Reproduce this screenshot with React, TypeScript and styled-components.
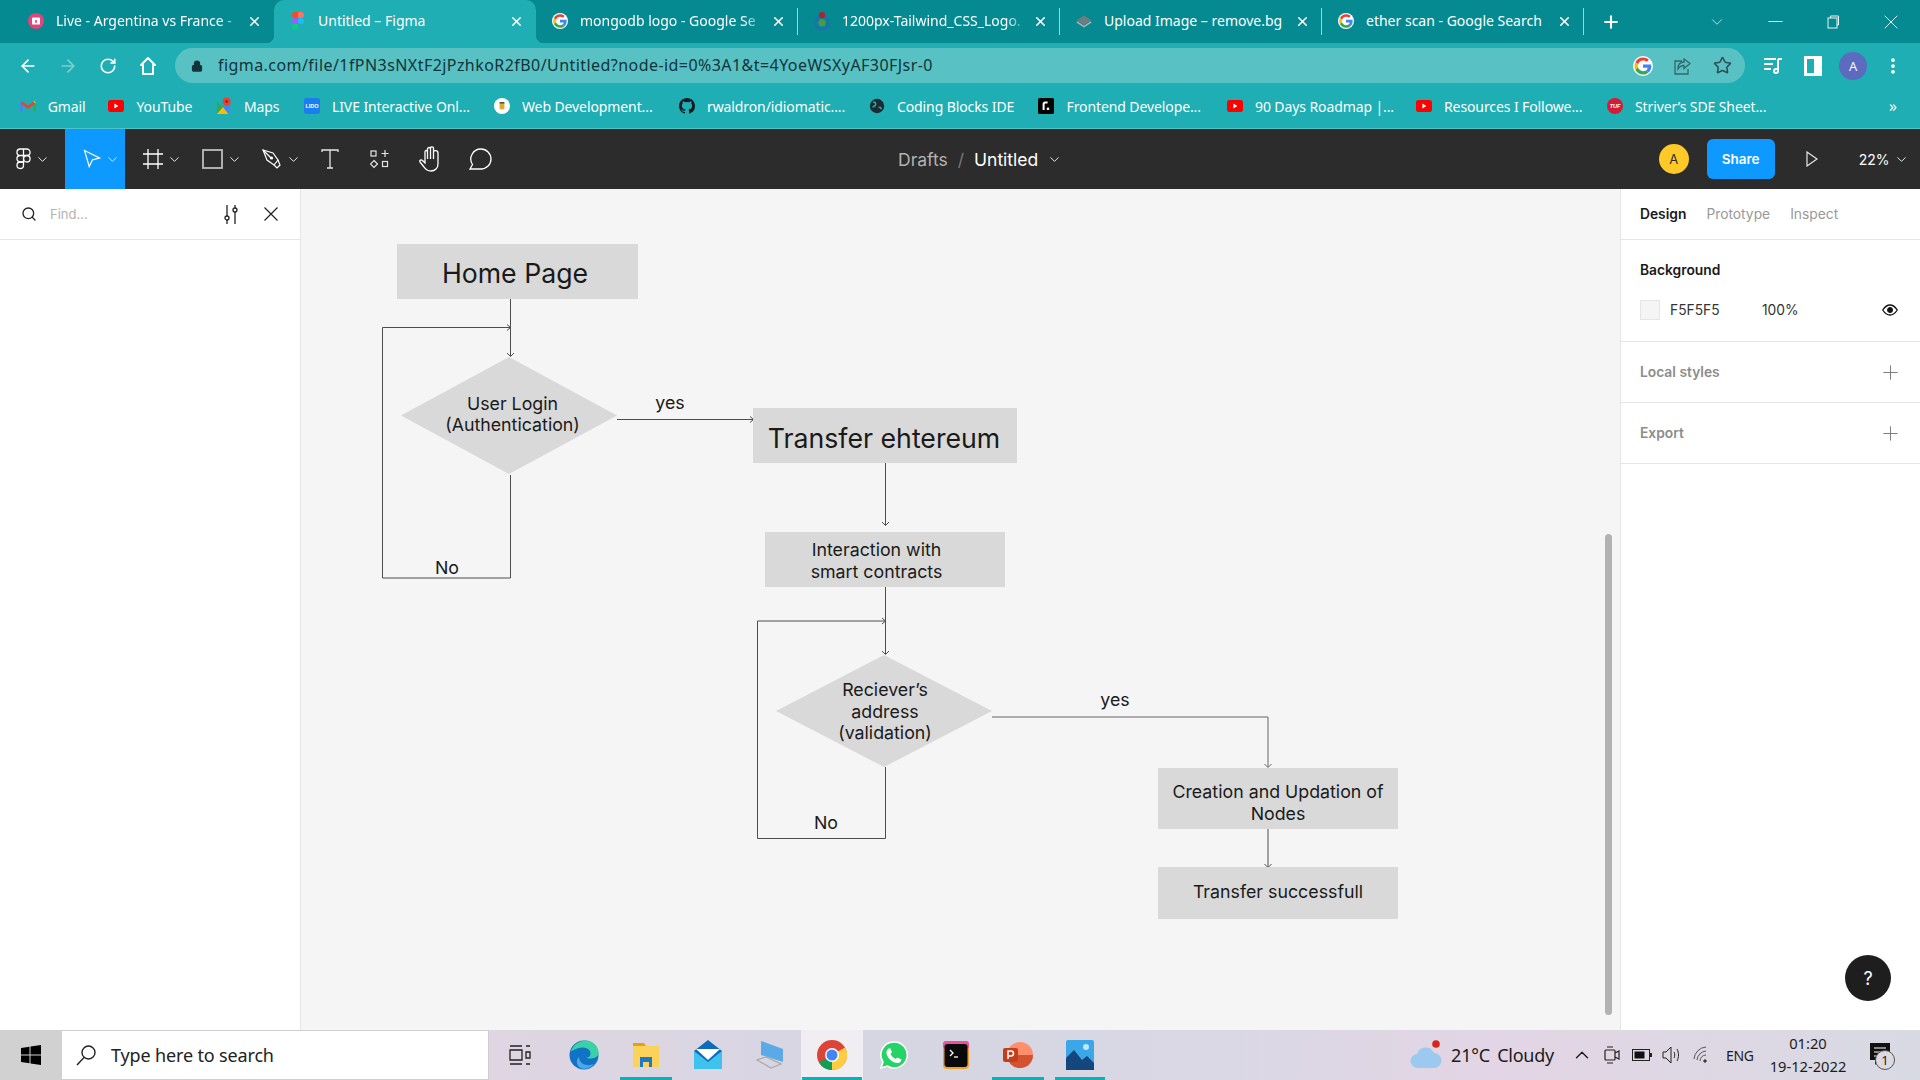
import { ReactNode } from "react";
import styled, { createGlobalStyle } from "styled-components";
import { ChevronDown, Minus, Plus, X, Search, ArrowLeft, ArrowRight, RotateCw, Star, Lock, MoreVertical, ChevronUp } from "lucide-react";

const GlobalStyle = createGlobalStyle`
  html, body { margin: 0; padding: 0; }
  body { font-family: "Open Sans", "Liberation Sans", sans-serif; overflow: hidden; }
  * { box-sizing: border-box; }
`;

const Page = styled.div`
  width: 1920px;
  height: 1080px;
  display: flex;
  flex-direction: column;
  overflow: hidden;
`;

/* browser chrome */
const TabStrip = styled.div`
  height: 43px;
  flex: none;
  display: flex;
  align-items: stretch;
  padding-left: 12px;
  background: #058a92;
`;
const Tab = styled.div<{ $active?: boolean; $sep?: boolean }>`
  position: relative;
  width: 262px;
  flex: none;
  display: flex;
  align-items: center;
  gap: 12px;
  padding: 0 0 2px 16px;
  border-radius: 10px 10px 0 0;
  background: ${(p) => (p.$active ? "#1eaeb3" : "transparent")};
  color: #fff;
  ${(p) =>
    p.$sep &&
    `&::after {
      content: "";
      position: absolute;
      right: 0;
      top: 8px;
      bottom: 8px;
      width: 1px;
      background: #9fd3d6;
    }`}
  ${(p) =>
    p.$active &&
    `&::before, &::after {
      content: "";
      position: absolute;
      bottom: 0;
      width: 8px;
      height: 8px;
    }
    &::before {
      left: -8px;
      background: radial-gradient(circle at 0 0, transparent 8px, #1eaeb3 8.5px);
    }
    &::after {
      right: -8px;
      background: radial-gradient(circle at 100% 0, transparent 8px, #1eaeb3 8.5px);
    }`}
`;
const TabIcon = styled.span`
  width: 16px;
  flex: none;
  display: flex;
  justify-content: center;
`;
const TabTitle = styled.span<{ $fade?: boolean }>`
  width: 186px;
  font-size: 14px;
  font-family: "Noto Sans", sans-serif;
  white-space: nowrap;
  ${(p) =>
    p.$fade &&
    `-webkit-mask-image: linear-gradient(90deg, #000 88%, transparent 100%);
     mask-image: linear-gradient(90deg, #000 88%, transparent 100%);`}
`;
const TabClose = styled.span`
  position: absolute;
  left: 235px;
  top: 14px;
  display: flex;
`;
const NewTab = styled.div`
  width: 54px;
  display: flex;
  align-items: center;
  justify-content: center;
  color: #fff;
`;
const WindowButtons = styled.div`
  margin-left: auto;
  display: flex;
`;
const WinBtn = styled.div`
  width: 58px;
  display: flex;
  align-items: center;
  justify-content: center;
  color: #e8f6f6;
`;

const NavRow = styled.div`
  height: 45px;
  flex: none;
  display: flex;
  align-items: center;
  background: #1eaeb3;
`;
const NavGroup = styled.div`
  width: 175px;
  flex: none;
  display: flex;
  padding-left: 8px;
`;
const NavBtn = styled.div<{ $dim?: boolean }>`
  width: 40px;
  height: 35px;
  flex: none;
  display: flex;
  align-items: center;
  justify-content: center;
  color: ${(p) => (p.$dim ? "#7fd0d3" : "#fff")};
`;
const AddressBar = styled.div`
  width: 1570px;
  height: 35px;
  flex: none;
  display: flex;
  align-items: center;
  padding: 0 3px 0 16px;
  border-radius: 18px;
  background: #58c1c3;
  color: #12343a;
`;
const Url = styled.span`
  margin: 0 0 2px 15px;
  flex: 1;
  font-size: 16px;
  font-family: "Noto Sans", sans-serif;
  letter-spacing: 0.44px;
  white-space: nowrap;
`;
const BarBtn = styled.div`
  width: 39.5px;
  display: flex;
  justify-content: center;
  color: #34666b;
`;
const ProfileGroup = styled.div`
  margin-left: 8px;
  display: flex;
`;
const Avatar = styled.div`
  width: 28px;
  height: 28px;
  border-radius: 50%;
  display: flex;
  align-items: center;
  justify-content: center;
  background: #5c6bc0;
  color: #fff;
  font-size: 13px;
`;

const BookmarkBar = styled.div`
  position: relative;
  height: 41px;
  flex: none;
  display: flex;
  align-items: center;
  padding: 0 0 4px 19.7px;
  background: #1eaeb3;
  border-bottom: 1px solid #4cc5c8;
`;
const Bookmark = styled.div<{ $w: number }>`
  width: ${(p) => p.$w}px;
  flex: none;
  display: flex;
  align-items: center;
  gap: 12px;
  color: #fff;
  font-size: 14px;
  font-family: "Noto Sans", sans-serif;
  letter-spacing: -0.1px;
  white-space: nowrap;
`;
const BookmarkIcon = styled.span`
  width: 16px;
  flex: none;
  display: flex;
  justify-content: center;
`;
const MoreBookmarks = styled.span`
  position: absolute;
  right: 23px;
  top: 7px;
  color: #fff;
  font-size: 16px;
`;

/* figma toolbar */
const FigmaBar = styled.div`
  height: 60px;
  flex: none;
  display: grid;
  grid-template-columns: 898px 1fr auto;
  align-items: stretch;
  background: #2c2c2c;
  color: #fff;
`;
const Tools = styled.div`
  display: flex;
`;
const Tool = styled.div<{ $w: number; $active?: boolean; $pad?: number }>`
  width: ${(p) => p.$w}px;
  flex: none;
  display: flex;
  align-items: center;
  justify-content: ${(p) => (p.$pad === undefined ? "center" : "flex-start")};
  padding-left: ${(p) => p.$pad ?? 0}px;
  gap: 4px;
  background: ${(p) => (p.$active ? "#0d99ff" : "transparent")};
  color: #fff;
`;
const TitleGroup = styled.div`
  display: flex;
  align-items: center;
  font-family: Inter, sans-serif;
  font-size: 17.5px;
`;
const Crumb = styled.span`
  color: #b3b3b3;
`;
const Slash = styled.span`
  margin: 0 10px;
  color: #777;
`;
const FileName = styled.span`
  margin-right: 9px;
  color: #fff;
`;
const BarRight = styled.div`
  display: flex;
  align-items: center;
  padding-right: 11px;
  font-family: Inter, sans-serif;
`;
const UserDot = styled.div`
  width: 30px;
  height: 30px;
  border-radius: 50%;
  display: flex;
  align-items: center;
  justify-content: center;
  background: #ffc928;
  color: #2c2c2c;
  font-size: 13px;
`;
const ShareButton = styled.div`
  width: 68px;
  height: 40px;
  margin-left: 18px;
  display: flex;
  align-items: center;
  justify-content: center;
  border-radius: 6px;
  background: #0d99ff;
  color: #fff;
  font-size: 13.5px;
  font-weight: 600;
`;
const PlayBtn = styled.div`
  width: 24px;
  margin: 0 35px 0 25px;
  display: flex;
  justify-content: center;
`;
const Zoom = styled.span`
  font-size: 14px;
  margin-right: 4.5px;
`;

/* workspace */
const Workspace = styled.div`
  flex: 1;
  min-height: 0;
  display: flex;
`;
const LeftPanel = styled.aside`
  width: 301px;
  flex: none;
  background: #fff;
  border-right: 1px solid #e5e5e5;
`;
const FindRow = styled.div`
  height: 51px;
  display: flex;
  align-items: center;
  gap: 24px;
  padding: 0 21px 0 21px;
  border-bottom: 1px solid #e5e5e5;
`;
const FindText = styled.span`
  margin-left: -11px;
  flex: 1;
  font-family: Inter, sans-serif;
  font-size: 13px;
  color: #b3b3b3;
`;
const FindAction = styled.div`
  width: 16px;
  display: flex;
  justify-content: center;
  color: #222;
`;
const Canvas = styled.main`
  position: relative;
  width: 1319px;
  flex: none;
  background: #f5f5f5;
  font-family: Inter, sans-serif;
  color: #1a1a1a;
  overflow: hidden;
`;
const Lines = styled.svg`
  position: absolute;
  left: 0;
  top: 0;
`;
const Shape = styled.div<{ $x: number; $y: number; $w: number; $h: number; $diamond?: boolean }>`
  position: absolute;
  left: ${(p) => p.$x - 301}px;
  top: ${(p) => p.$y - 189}px;
  width: ${(p) => p.$w}px;
  height: ${(p) => p.$h}px;
  background: #d9d9d9;
  ${(p) => p.$diamond && "clip-path: polygon(50% 0, 100% 50%, 50% 100%, 0 50%);"}
`;
const ChartLabel = styled.div<{ $x: number; $y: number; $big?: boolean }>`
  position: absolute;
  left: ${(p) => p.$x - 301}px;
  top: ${(p) => p.$y - 189}px;
  transform: translate(-50%, -50%);
  font-size: ${(p) => (p.$big ? "26.7px" : "17.8px")};
  line-height: 21.5px;
  text-align: center;
  white-space: pre;
`;
const ScrollThumb = styled.div`
  position: absolute;
  left: 1304px;
  top: 345px;
  width: 7px;
  height: 481px;
  border-radius: 4px;
  background: #b2b2b2;
`;
const HelpButton = styled.div`
  position: absolute;
  right: -271px;
  bottom: 29px;
  width: 46px;
  height: 46px;
  z-index: 2;
  border-radius: 50%;
  display: flex;
  align-items: center;
  justify-content: center;
  background: #1e1e1e;
  color: #fff;
  font-size: 18px;
  font-family: Inter, sans-serif;
`;
const CanvasWrap = styled.div`
  position: relative;
  display: flex;
`;
const RightPanel = styled.aside`
  flex: 1;
  background: #fff;
  border-left: 1px solid #e5e5e5;
  font-family: Inter, sans-serif;
  font-size: 13.8px;
  line-height: 17px;
`;
const TabsRow = styled.div`
  height: 51px;
  display: flex;
  align-items: center;
  gap: 20px;
  padding: 0 0 0 19px;
  border-bottom: 1px solid #e5e5e5;
`;
const PanelTab = styled.span<{ $active?: boolean }>`
  font-weight: ${(p) => (p.$active ? 600 : 400)};
  color: ${(p) => (p.$active ? "#1a1a1a" : "#999")};
`;
const BgSection = styled.section`
  height: 102px;
  padding: 22px 19px 0;
  border-bottom: 1px solid #e5e5e5;
`;
const SectionTitle = styled.div`
  font-weight: 600;
  color: #1a1a1a;
`;
const ColorRow = styled.div`
  margin-top: 21px;
  display: flex;
  align-items: center;
  color: #333;
`;
const Swatch = styled.div`
  width: 20px;
  height: 20px;
  border: 1px solid #e5e5e5;
  background: #f5f5f5;
`;
const Hex = styled.span`
  width: 92px;
  margin-left: 10px;
`;
const Percent = styled.span`
  width: 120px;
`;
const CollapsedSection = styled.section`
  height: 61px;
  display: flex;
  align-items: center;
  justify-content: space-between;
  padding: 0 18px 0 19px;
  border-bottom: 1px solid #e5e5e5;
  color: #8c8c8c;
  font-weight: 600;
`;

/* windows taskbar */
const Taskbar = styled.footer`
  height: 50px;
  flex: none;
  display: flex;
  align-items: stretch;
  background: linear-gradient(90deg, #d4d4d4 0 3%, #e0d5e3 24%, #d5d6e2 48%, #d9d8e4 62%, #e3d5e5 78%, #d8dae3 100%);
`;
const StartBtn = styled.div`
  width: 61px;
  flex: none;
  display: flex;
  align-items: center;
  justify-content: center;
  background: #d1d1d1;
`;
const SearchBox = styled.div`
  width: 428px;
  flex: none;
  display: flex;
  align-items: center;
  gap: 14px;
  padding-left: 13px;
  background: #fff;
  border: 1px solid #cfcfcf;
  font-family: "Noto Sans", sans-serif;
  font-size: 18px;
  letter-spacing: -0.15px;
  color: #222;
`;
const TaskBtn = styled.div<{ $on?: boolean; $bar?: number; $lead?: boolean }>`
  position: relative;
  width: 62px;
  flex: none;
  display: flex;
  align-items: center;
  justify-content: center;
  margin-right: ${(p) => (p.$lead ? "1.5px" : "0")};
  background: ${(p) => (p.$on ? "#f0edf3" : "transparent")};
  ${(p) =>
    p.$bar &&
    `&::after {
      content: "";
      position: absolute;
      bottom: 0;
      left: 50%;
      transform: translateX(-50%);
      width: ${p.$bar}px;
      height: 3px;
      background: #0cb1b8;
    }`}
`;
const Tray = styled.div`
  margin-left: auto;
  display: flex;
  align-items: center;
  font-family: "Noto Sans", sans-serif;
  color: #1c1c1c;
`;
const Weather = styled.span`
  margin: 0 13px 0 9px;
  font-size: 18px;
  letter-spacing: -0.25px;
  word-spacing: 3px;
  white-space: nowrap;
`;
const TrayIcon = styled.div`
  width: 30px;
  display: flex;
  justify-content: center;
`;
const Lang = styled.span`
  width: 28px;
  margin-left: 9px;
  font-size: 14px;
  letter-spacing: -0.3px;
  white-space: nowrap;
`;
const Clock = styled.div`
  width: 108px;
  text-align: center;
  font-size: 14.7px;
  line-height: 23px;
`;
const Notif = styled.div`
  position: relative;
  width: 24px;
  margin: 0 26px 0 8px;
  display: flex;
`;
const NotifCount = styled.span`
  position: absolute;
  left: 5px;
  top: 7px;
  width: 20px;
  height: 20px;
  border: 1px solid #555;
  border-radius: 50%;
  display: flex;
  align-items: center;
  justify-content: center;
  background: #dcd9e2;
  font-size: 13px;
`;
const TinyMark = styled.svg`
  font-family: "Liberation Sans", sans-serif;
  font-weight: 700;
`;

const GoogleG = ({ size = 18 }: { size?: number }) => (
  <svg width={size} height={size} viewBox="0 0 48 48">
    <circle cx="24" cy="24" r="24" fill="#fff" />
    <path fill="#ea4335" d="M24 11c3.4 0 6.3 1.200 8.600 3.300l5.600-5.600C34.600 5.500 29.700 3.500 24 3.500 16 3.500 9.100 8.100 5.700 14.800l6.600 5.100C13.900 14.700 18.500 11 24 11z" />
    <path fill="#4285f4" d="M44 24.500c0-1.500-.1-2.900-.4-4.300H24v8.100h11.300c-.5 2.600-2 4.900-4.200 6.400l6.400 5C41.300 36.100 44 30.800 44 24.500z" />
    <path fill="#fbbc05" d="M12.300 28.100c-.4-1.300-.7-2.700-.7-4.100s.2-2.800.7-4.100l-6.600-5.100C4.300 17.500 3.500 20.700 3.500 24s.8 6.500 2.200 9.200l6.600-5.100z" />
    <path fill="#34a853" d="M24 44.500c5.500 0 10.200-1.800 13.500-4.900l-6.400-5c-1.800 1.200-4.100 1.900-7.100 1.900-5.500 0-10.100-3.700-11.700-8.700l-6.600 5.100C9.100 39.900 16 44.500 24 44.500z" />
  </svg>
);

const YouTubeIcon = () => (
  <svg width="20" height="16" viewBox="0 0 20 16">
    <rect width="20" height="15" y="0.500" rx="3.500" fill="#f00" />
    <path d="M8 5l5 3-5 3z" fill="#fff" />
  </svg>
);

const FigmaColor = () => (
  <svg width="12" height="18" viewBox="0 0 12 18">
    <path d="M0 3a3 3 0 0 1 3-3h3v6H3a3 3 0 0 1-3-3z" fill="#f24e1e" />
    <path d="M6 0h3a3 3 0 0 1 0 6H6z" fill="#ff7262" />
    <path d="M0 9a3 3 0 0 1 3-3h3v6H3a3 3 0 0 1-3-3z" fill="#a259ff" />
    <circle cx="9" cy="9" r="3" fill="#1abcfe" />
    <path d="M0 15a3 3 0 0 1 3-3h3v3a3 3 0 0 1-6 0z" fill="#0acf83" />
  </svg>
);

const tabs: { title: string; icon: ReactNode; fade?: boolean; active?: boolean; sep?: boolean }[] = [
  {
    title: "Live - Argentina vs France - ",
    fade: true,
    icon: (
      <svg width="20" height="20" viewBox="0 0 18 18">
        <circle cx="9" cy="9" r="9" fill="#e0457b" />
        <rect x="4.500" y="5" width="9" height="8" rx="1" fill="#fff" />
        <rect x="8" y="8" width="2" height="3" fill="#e0457b" />
      </svg>
    ),
  },
  { title: "Untitled – Figma", active: true, icon: <FigmaColor /> },
  { title: "mongodb logo - Google Se", fade: true, sep: true, icon: <GoogleG size={20} /> },
  {
    title: "1200px-Tailwind_CSS_Logo.",
    fade: true,
    sep: true,
    icon: (
      <svg width="20" height="22" viewBox="0 0 18 20">
        <circle cx="9" cy="12" r="7.500" fill="none" stroke="#1f6fb2" strokeWidth="2.500" />
        <circle cx="9" cy="12" r="4" fill="#4a9a4a" />
        <circle cx="9" cy="3.500" r="3.500" fill="#b3202c" />
      </svg>
    ),
  },
  {
    title: "Upload Image – remove.bg",
    sep: true,
    icon: (
      <svg width="20" height="18" viewBox="0 0 20 18">
        <path d="M10 2l9 6-9 6-9-6z" fill="#6f7c80" />
        <path d="M1 10l9 6 9-6" fill="none" stroke="#a9b3b6" strokeWidth="2" />
      </svg>
    ),
  },
  { title: "ether scan - Google Search", sep: true, icon: <GoogleG size={20} /> },
];

const Github = () => (
  <svg width="20" height="20" viewBox="0 0 16 16">
    <path
      fill="#161b22"
      d="M8 0C3.580 0 0 3.580 0 8c0 3.540 2.290 6.530 5.470 7.590.4.070.55-.170.55-.380v-1.340c-2.230.480-2.700-1.070-2.700-1.070-.360-.920-.890-1.170-.890-1.170-.730-.500.050-.490.050-.490.800.060 1.230.830 1.230.830.710 1.220 1.870.870 2.330.660.070-.520.280-.870.510-1.070-1.780-.200-3.640-.890-3.640-3.950 0-.870.310-1.590.820-2.150-.080-.200-.360-1.020.080-2.120 0 0 .670-.210 2.200.820a7.600 7.600 0 0 1 4 0c1.530-1.040 2.200-.820 2.200-.820.440 1.100.160 1.920.080 2.120.510.560.820 1.270.820 2.150 0 3.070-1.870 3.750-3.650 3.950.290.250.540.730.540 1.480v2.200c0 .210.150.460.550.380A8.010 8.010 0 0 0 16 8c0-4.420-3.580-8-8-8z"
    />
  </svg>
);

const bookmarks: { label: string; w: number; icon: ReactNode }[] = [
  {
    label: "Gmail",
    w: 88.8,
    icon: (
      <svg width="18" height="14" viewBox="0 0 18 14" fill="none" strokeWidth="3">
        <path d="M1.500 13V3" stroke="#4285f4" />
        <path d="M16.500 13V3" stroke="#34a853" />
        <path d="M2 3l7 5.500L16 3" stroke="#ea4335" />
        <path d="M16 3l1-.8" stroke="#fbbc05" />
      </svg>
    ),
  },
  { label: "YouTube", w: 107.5, icon: <YouTubeIcon /> },
  {
    label: "Maps",
    w: 88,
    icon: (
      <svg width="18" height="20" viewBox="0 0 18 20">
        <path d="M1 5l7 6-7 8z" fill="#34a853" />
        <path d="M1 19l7-8 6 8z" fill="#fbbc05" />
        <path d="M14 19L8 11l8-4z" fill="#4285f4" />
        <circle cx="12" cy="5" r="4.500" fill="#ea4335" />
        <circle cx="12" cy="5" r="1.500" fill="#a31515" />
      </svg>
    ),
  },
  {
    label: "LIVE Interactive Onl...",
    w: 190,
    icon: (
      <TinyMark width="20" height="20" viewBox="0 0 20 20">
        <rect width="20" height="20" rx="3" fill="#1a7df0" />
        <text x="10" y="12.500" fontSize="7" textAnchor="middle" fill="#fff">
          LIDO
        </text>
      </TinyMark>
    ),
  },
  {
    label: "Web Development...",
    w: 185,
    icon: (
      <svg width="20" height="20" viewBox="0 0 20 20">
        <circle cx="10" cy="10" r="10" fill="#fff" />
        <rect x="7" y="6" width="6" height="8" rx="1" fill="#e6a82d" />
        <rect x="7" y="5" width="6" height="2" fill="#555" />
      </svg>
    ),
  },
  { label: "rwaldron/idiomatic....", w: 190, icon: <Github /> },
  {
    label: "Coding Blocks IDE",
    w: 169.5,
    icon: (
      <svg width="20" height="20" viewBox="0 0 20 20">
        <circle cx="10" cy="10" r="9" fill="#1f2a30" />
        <path d="M5 5c3 0 4 2 3 4s-3 1-3 3M12 12c2-1 3 0 3 2" stroke="#1eaeb3" strokeWidth="2" fill="none" />
      </svg>
    ),
  },
  {
    label: "Frontend Develope...",
    w: 188.5,
    icon: (
      <svg width="20" height="20" viewBox="0 0 20 20">
        <rect width="20" height="20" rx="2" fill="#000" />
        <path d="M7 15V7.500a2 2 0 0 1 2-2h3" stroke="#fff" strokeWidth="2.500" fill="none" />
        <rect x="11" y="12" width="3" height="3" fill="#fff" />
      </svg>
    ),
  },
  { label: "90 Days Roadmap |...", w: 189, icon: <YouTubeIcon /> },
  { label: "Resources I Followe...", w: 191, icon: <YouTubeIcon /> },
  {
    label: "Striver’s SDE Sheet...",
    w: 170,
    icon: (
      <TinyMark width="20" height="20" viewBox="0 0 20 20">
        <circle cx="10" cy="10" r="10" fill="#d71a36" />
        <text x="10" y="12.500" fontSize="7" fontStyle="italic" textAnchor="middle" fill="#fff">
          TUF
        </text>
      </TinyMark>
    ),
  },
];

const FigmaMark = () => (
  <svg width="15" height="22" viewBox="0 0 15 22" fill="none" stroke="#fff" strokeWidth="1.300">
    <path d="M7.500 1H4.200a3.250 3.250 0 0 0 0 6.500h3.300zM7.500 1h3.300a3.250 3.250 0 0 1 0 6.500H7.500zM7.500 7.500H4.200a3.250 3.250 0 0 0 0 6.500h3.300z" />
    <circle cx="10.800" cy="10.750" r="3.250" />
    <path d="M7.500 14H4.200a3.250 3.250 0 1 0 3.300 3.250z" />
  </svg>
);
const MoveIcon = () => (
  <svg width="18" height="20" viewBox="0 0 18 20" fill="none" stroke="#fff" strokeWidth="1.200">
    <path d="M1.500 1.500l15 7.500-7 1.800-3.300 6.700z" />
  </svg>
);
const FrameIcon = () => (
  <svg width="20" height="20" viewBox="0 0 20 20" stroke="#fff" strokeWidth="1.300">
    <path d="M5 0v20M15 0v20M0 5h20M0 15h20" />
  </svg>
);
const RectIcon = () => (
  <svg width="21" height="20" viewBox="0 0 21 20" fill="none" stroke="#bdbdbd" strokeWidth="1.800">
    <rect x="1" y="1" width="19" height="18" />
  </svg>
);
const PenIcon = () => (
  <svg width="20" height="20" viewBox="0 0 20 20" fill="none" stroke="#fff" strokeWidth="1.200">
    <path d="M1 1l10 3 5 7-4 5-7-5z" />
    <path d="M12 16l3 3 3-3-2-5" />
    <circle cx="9.500" cy="9" r="1" fill="#fff" />
    <path d="M1 1l8 8" />
  </svg>
);
const TextIcon = () => (
  <svg width="18" height="20" viewBox="0 0 18 20" fill="none" stroke="#e6e6e6" strokeWidth="1.300">
    <path d="M1 3V1h16v2M9 1v18M6 19h6" />
  </svg>
);
const ComponentsIcon = () => (
  <svg width="20" height="20" viewBox="0 0 20 20" fill="none" stroke="#e6e6e6" strokeWidth="1.200">
    <rect x="1" y="2" width="5" height="5" />
    <path d="M15 1v7M11.500 4.500h7" />
    <path d="M4 11.500l3.500 3.500L4 18.500.5 15z" />
    <rect x="12.500" y="12.500" width="5" height="5" />
  </svg>
);
const HandIcon = () => (
  <svg width="24" height="26" viewBox="0 0 24 26" fill="none" stroke="#fff" strokeWidth="1.300">
    <path d="M20 7v11c0 4-3 7-7 7-3 0-5-1-7-4l-4-5c-1-1.500 1-3 2.500-1.500L7 17V6c0-2 2.500-2 2.500 0v7-10c0-2 3-2 3 0v10-11c0-1.500 3-1.500 3 0v11-7c0-2 4.500-2 4.500 1z" />
  </svg>
);
const CommentIcon = () => (
  <svg width="23" height="22" viewBox="0 0 23 22" fill="none" stroke="#fff" strokeWidth="1.300">
    <path d="M12 1a10 10 0 0 1 0 20H1l2.500-4.500A10 10 0 0 1 12 1z" />
  </svg>
);
const SmallChevron = () => <ChevronDown size={15} strokeWidth={1.600} color="#e6e6e6" />;

const SlidersIcon = () => (
  <svg width="16" height="19" viewBox="0 0 16 19" fill="none" stroke="#222" strokeWidth="1.300">
    <path d="M4 0v11M4 15v4M12 0v3M12 7v12" />
    <circle cx="4" cy="13" r="2" />
    <circle cx="12" cy="5" r="2" />
  </svg>
);
const CloseIcon = () => (
  <svg width="14" height="14" viewBox="0 0 14 14" stroke="#222" strokeWidth="1.200">
    <path d="M.5.500l13 13M13.500.500l-13 13" />
  </svg>
);
const EyeIcon = () => (
  <svg width="16" height="12" viewBox="0 0 16 12" fill="none" stroke="#111" strokeWidth="1.300">
    <path d="M.7 6C3 2.500 5.500 1 8 1s5 1.500 7.300 5C13 9.500 10.500 11 8 11S3 9.500.7 6z" />
    <circle cx="8" cy="6" r="2.300" fill="#111" />
  </svg>
);

const WinLogo = () => (
  <svg width="20" height="20" viewBox="0 0 20 20" fill="#000">
    <path d="M0 3l8.500-1.200v7.700H0zM9.500 1.600L20 0v9.500H9.500zM0 10.500h8.500v7.700L0 17zM9.500 10.500H20V20L9.500 18.400z" />
  </svg>
);
const taskIcons: { bar?: number; on?: boolean; icon: ReactNode }[] = [
  {
    icon: (
      <svg width="22" height="20" viewBox="0 0 22 20" fill="none" stroke="#222" strokeWidth="1.300">
        <path d="M1 1h12M1 19h12M1 5h12v10H1zM17 1h4M17 19h4M17 7h4v6h-4z" />
      </svg>
    ),
  },
  {
    icon: (
      <svg width="30" height="30" viewBox="0 0 30 30">
        <circle cx="15" cy="15" r="14.500" fill="#1173c5" />
        <path d="M2 11C5 3 12 .5 17 .5c7 0 12.500 6 12.500 12 0 5-5 6-9 6-3 0-3-1-3-1 3 0 4-2 4-4 0-4-4-6-8-6-5 0-10 3-11.500 4z" fill="#3bd1a6" />
        <path d="M10 17c0 7 8 10 15 7-3 4-8 5.500-12 4.500C8 27 6 21 10 17z" fill="#4ea8e8" />
      </svg>
    ),
  },
  {
    bar: 52,
    icon: (
      <svg width="26" height="26" viewBox="0 0 26 26">
        <path d="M0 1h11l2 3H0z" fill="#e5a00d" />
        <rect y="4" width="26" height="21" fill="#fbd25a" />
        <path d="M7 25V15h12v10h-3v-5h-6v5z" fill="#1d78c9" />
      </svg>
    ),
  },
  {
    icon: (
      <svg width="30" height="30" viewBox="0 0 30 30">
        <path d="M15 0L29 11v18H1V11z" fill="#0f6cbd" />
        <path d="M3 9h24L15 20z" fill="#fff" />
        <path d="M1 11l14 11 14-11v18H1z" fill="#3fc2ee" />
      </svg>
    ),
  },
  {
    icon: (
      <svg width="30" height="30" viewBox="0 0 30 30">
        <path d="M6 1l22 8v13L6 15z" fill="#5ba9e6" />
        <path d="M2 20l14 8 10-4-15-7z" fill="none" stroke="#aaa" strokeWidth="1.300" />
      </svg>
    ),
  },
  {
    on: true,
    bar: 60,
    icon: (
      <svg width="30" height="30" viewBox="0 0 30 30">
        <circle cx="15" cy="15" r="15" fill="#db4437" />
        <path d="M15 15L2 22.500A15 15 0 0 0 15 30z" fill="#0f9d58" />
        <path d="M15 15v15A15 15 0 0 0 28 7.500z" fill="#ffcd40" />
        <circle cx="15" cy="15" r="7" fill="#fff" />
        <circle cx="15" cy="15" r="5.500" fill="#4285f4" />
      </svg>
    ),
  },
  {
    icon: (
      <svg width="28" height="28" viewBox="0 0 28 28">
        <path d="M14 1a13 13 0 0 0-11 20L1 27l6.300-2A13 13 0 1 0 14 1z" fill="#25d366" stroke="#fff" strokeWidth="1.500" />
        <path d="M10 7l2 4-1.500 2c1 2 3 4 5 5l2-1.500 4 2c-.5 3-3 4-5 3.500-5-1-9-5-10-9.500C6 10 7.500 7.500 10 7z" fill="#fff" />
      </svg>
    ),
  },
  {
    icon: (
      <svg width="26" height="28" viewBox="0 0 26 28">
        <rect width="26" height="28" rx="4" fill="#f0a030" />
        <rect width="26" height="8" rx="3" fill="#ec4fa0" />
        <rect x="1.500" y="3" width="23" height="23" rx="3" fill="#0a0a0a" />
        <path d="M7 9l3 3-3 3" stroke="#fff" fill="none" strokeWidth="1.300" />
        <path d="M11 16h4" stroke="#fff" strokeWidth="1.300" />
      </svg>
    ),
  },
  {
    bar: 52,
    icon: (
      <svg width="30" height="30" viewBox="0 0 30 30">
        <circle cx="17" cy="15" r="13" fill="#ff8f6b" />
        <path d="M17 15h13a13 13 0 0 1-13 13 13 13 0 0 1-13-13z" fill="#d35230" />
        <rect x="0" y="8" width="15" height="14" rx="2" fill="#c43e1c" />
        <path d="M5 19v-8h3a2.500 2.500 0 0 1 0 5H5" stroke="#fff" strokeWidth="1.500" fill="none" />
      </svg>
    ),
  },
  {
    bar: 50,
    icon: (
      <svg width="28" height="30" viewBox="0 0 28 30">
        <rect width="28" height="30" rx="2" fill="#3ca7e8" />
        <circle cx="20" cy="7" r="3" fill="#bfe8ff" />
        <path d="M0 30V18l8-8 8 10 5-4 7 7v7z" fill="#14477e" />
      </svg>
    ),
  },
];

const shapes = [
  { x: 397, y: 244, w: 241, h: 55 },
  { x: 401, y: 357, w: 216, h: 117, diamond: true },
  { x: 753, y: 408, w: 264, h: 55 },
  { x: 765, y: 532, w: 240, h: 55 },
  { x: 776, y: 655, w: 216, h: 112, diamond: true },
  { x: 1158, y: 768, w: 240, h: 61 },
  { x: 1158, y: 867, w: 240, h: 52 },
];
const labels = [
  { x: 515, y: 274, text: "Home Page", big: true },
  { x: 884, y: 439, text: "Transfer ehtereum", big: true },
  { x: 512.500, y: 413.500, text: "User Login\n(Authentication)" },
  { x: 670, y: 403, text: "yes" },
  { x: 447, y: 568, text: "No" },
  { x: 876.500, y: 560, text: "Interaction with\nsmart contracts" },
  { x: 885, y: 711, text: "Reciever’s\naddress\n(validation)" },
  { x: 1115, y: 700, text: "yes" },
  { x: 826, y: 823, text: "No" },
  { x: 1278, y: 802, text: "Creation and Updation of\nNodes" },
  { x: 1278, y: 892, text: "Transfer successfull" },
];

function App() {
  return (
    <Page>
      <GlobalStyle />
      <TabStrip>
        {tabs.map((tab) => (
          <Tab key={tab.title} $active={tab.active} $sep={tab.sep}>
            <TabIcon>{tab.icon}</TabIcon>
            <TabTitle $fade={tab.fade}>{tab.title}</TabTitle>
            <TabClose>
              <X size={15} strokeWidth={2.5} />
            </TabClose>
          </Tab>
        ))}
        <NewTab>
          <Plus size={20} strokeWidth={2.500} />
        </NewTab>
        <WindowButtons>
          <WinBtn>
            <ChevronDown size={18} strokeWidth={1} />
          </WinBtn>
          <WinBtn>
            <Minus size={23} strokeWidth={1} />
          </WinBtn>
          <WinBtn>
            <svg width="13" height="14" viewBox="0 0 13 14" fill="none" stroke="currentColor">
              <rect x="1" y="3" width="9" height="10" />
              <path d="M3.500 3V1h8v9h-1.500" />
            </svg>
          </WinBtn>
          <WinBtn>
            <X size={24} strokeWidth={1} />
          </WinBtn>
        </WindowButtons>
      </TabStrip>

      <NavRow>
        <NavGroup>
          <NavBtn>
            <ArrowLeft size={20} strokeWidth={2} />
          </NavBtn>
          <NavBtn $dim>
            <ArrowRight size={20} strokeWidth={2} />
          </NavBtn>
          <NavBtn>
            <RotateCw size={18} strokeWidth={2.200} />
          </NavBtn>
          <NavBtn>
            <svg width="18" height="20" viewBox="0 0 18 20" fill="none" stroke="#fff" strokeWidth="2">
              <path d="M9 2l7 7h-2v9H4V9H2z" strokeLinejoin="round" />
            </svg>
          </NavBtn>
        </NavGroup>
        <AddressBar>
          <Lock size={12} fill="#12343a" strokeWidth={2.500} />
          <Url>figma.com/file/1fPN3sNXtF2jPzhkoR2fB0/Untitled?node-id=0%3A1&amp;t=4YoeWSXyAF30FJsr-0</Url>
          <BarBtn>
            <GoogleG size={20} />
          </BarBtn>
          <BarBtn>
            <svg width="20" height="20" viewBox="0 0 20 20" fill="none" stroke="currentColor" strokeWidth="1.300">
              <path d="M9 5H2v13h13v-5M11 3v3C7 6 5 9 5 13c2-3 4-3.500 6-3.500v3l6-5z" />
            </svg>
          </BarBtn>
          <BarBtn>
            <Star size={19} strokeWidth={2} color="#2b5055" />
          </BarBtn>
        </AddressBar>
        <ProfileGroup>
          <NavBtn>
            <svg width="20" height="20" viewBox="0 0 20 20" fill="none" stroke="#fff" strokeWidth="2">
              <path d="M1 3h12M1 8h9M1 13h7M15 3v12a2 2 0 1 1-2-2h2M15 3h4" />
            </svg>
          </NavBtn>
          <NavBtn>
            <svg width="18" height="20" viewBox="0 0 18 20">
              <path d="M0 0h18v20H0zM3 3v14h7V3z" fill="#fff" fillRule="evenodd" />
            </svg>
          </NavBtn>
          <NavBtn>
            <Avatar>A</Avatar>
          </NavBtn>
          <NavBtn>
            <MoreVertical size={20} strokeWidth={2.500} />
          </NavBtn>
        </ProfileGroup>
      </NavRow>

      <BookmarkBar>
        {bookmarks.map((b) => (
          <Bookmark key={b.label} $w={b.w}>
            <BookmarkIcon>{b.icon}</BookmarkIcon>
            {b.label}
          </Bookmark>
        ))}
        <MoreBookmarks>»</MoreBookmarks>
      </BookmarkBar>

      <FigmaBar>
        <Tools>
          <Tool $w={65} $pad={16}>
            <FigmaMark />
            <SmallChevron />
          </Tool>
          <Tool $w={60} $active $pad={18}>
            <MoveIcon />
            <SmallChevron />
          </Tool>
          <Tool $w={60} $pad={18}>
            <FrameIcon />
            <SmallChevron />
          </Tool>
          <Tool $w={60} $pad={17}>
            <RectIcon />
            <SmallChevron />
          </Tool>
          <Tool $w={60} $pad={17}>
            <PenIcon />
            <SmallChevron />
          </Tool>
          <Tool $w={50}>
            <TextIcon />
          </Tool>
          <Tool $w={50}>
            <ComponentsIcon />
          </Tool>
          <Tool $w={50}>
            <HandIcon />
          </Tool>
          <Tool $w={50}>
            <CommentIcon />
          </Tool>
        </Tools>
        <TitleGroup>
          <Crumb>Drafts</Crumb>
          <Slash>/</Slash>
          <FileName>Untitled</FileName>
          <SmallChevron />
        </TitleGroup>
        <BarRight>
          <UserDot>A</UserDot>
          <ShareButton>Share</ShareButton>
          <PlayBtn>
            <svg width="12" height="16" viewBox="0 0 12 16" fill="none" stroke="#e6e6e6" strokeWidth="1.200">
              <path d="M1 1l10 7-10 7z" />
            </svg>
          </PlayBtn>
          <Zoom>22%</Zoom>
          <SmallChevron />
        </BarRight>
      </FigmaBar>

      <Workspace>
        <LeftPanel>
          <FindRow>
            <Search size={16} strokeWidth={2} color="#222" />
            <FindText>Find...</FindText>
            <FindAction>
              <SlidersIcon />
            </FindAction>
            <FindAction>
              <CloseIcon />
            </FindAction>
          </FindRow>
        </LeftPanel>
        <CanvasWrap>
          <Canvas>
            <Lines width="1319" height="841" viewBox="301 189 1319 841" fill="none" stroke="#4d4d4d" strokeWidth="1">
              <path d="M510.500 299V356M507 353l3.500 3.500 3.500-3.500" />
              <path d="M510.500 475V578H382.500V327.500H510M507 324.500l3.500 3-3.500 3" />
              <path d="M617 419.500H753M750 416.500l3.500 3-3.500 3" />
              <path d="M885.500 463V525M882 522l3.500 3.500 3.500-3.500" />
              <path d="M885.500 587V654M882 651l3.500 3.500 3.500-3.500" />
              <path d="M885.500 767V838.500H757.500V621H885M882 618l3.500 3-3.500 3" />
              <path d="M992 717H1268V767M1264.500 764l3.500 3.500 3.500-3.500" stroke="#666" />
              <path d="M1268 829V867M1264.500 864l3.500 3.500 3.500-3.500" />
            </Lines>
            {shapes.map((s) => (
              <Shape key={s.x + "-" + s.y} $x={s.x} $y={s.y} $w={s.w} $h={s.h} $diamond={s.diamond} />
            ))}
            {labels.map((l) => (
              <ChartLabel key={l.text + l.x} $x={l.x} $y={l.y} $big={l.big}>
                {l.text}
              </ChartLabel>
            ))}
            <ScrollThumb />
          </Canvas>
          <HelpButton>?</HelpButton>
        </CanvasWrap>
        <RightPanel>
          <TabsRow>
            <PanelTab $active>Design</PanelTab>
            <PanelTab>Prototype</PanelTab>
            <PanelTab>Inspect</PanelTab>
          </TabsRow>
          <BgSection>
            <SectionTitle>Background</SectionTitle>
            <ColorRow>
              <Swatch />
              <Hex>F5F5F5</Hex>
              <Percent>100%</Percent>
              <EyeIcon />
            </ColorRow>
          </BgSection>
          <CollapsedSection>
            Local styles
            <Plus size={23} strokeWidth={1} color="#777" />
          </CollapsedSection>
          <CollapsedSection>
            Export
            <Plus size={23} strokeWidth={1} color="#777" />
          </CollapsedSection>
        </RightPanel>
      </Workspace>

      <Taskbar>
        <StartBtn>
          <WinLogo />
        </StartBtn>
        <SearchBox>
          <svg width="22" height="22" viewBox="0 0 22 22" fill="none" stroke="#222" strokeWidth="1.400">
            <circle cx="13.500" cy="8.500" r="6.500" />
            <path d="M9 13.500L2 21" />
          </svg>
          Type here to search
        </SearchBox>
        {taskIcons.map((t, i) => (
          <TaskBtn key={i} $on={t.on} $bar={t.bar} $lead={i === 0}>
            {t.icon}
          </TaskBtn>
        ))}
        <Tray>
          <svg width="32" height="30" viewBox="0 0 32 30">
            <path d="M8 28a7 7 0 0 1-1-14 9 9 0 0 1 17-1 7.500 7.500 0 0 1 0 15z" fill="#9cc9f0" />
            <circle cx="26" cy="4" r="3.800" fill="#d9251c" />
          </svg>
          <Weather>21°C Cloudy</Weather>
          <TrayIcon>
            <ChevronUp size={22} strokeWidth={1.500} />
          </TrayIcon>
          <TrayIcon>
            <svg width="16" height="20" viewBox="0 0 16 20" fill="none" stroke="#222" strokeWidth="1.200">
              <rect x="1" y="5" width="10" height="10" rx="1" />
              <path d="M11 8l4-2v8l-4-2M3 2h6M3 18h6" />
            </svg>
          </TrayIcon>
          <TrayIcon>
            <svg width="20" height="12" viewBox="0 0 20 12">
              <rect x=".5" y=".5" width="17" height="11" fill="none" stroke="#222" />
              <rect x="2.500" y="2.500" width="10" height="7" fill="#111" />
              <rect x="18" y="4" width="2" height="4" fill="#222" />
            </svg>
          </TrayIcon>
          <TrayIcon>
            <svg width="20" height="20" viewBox="0 0 20 20" fill="none" stroke="#222" strokeWidth="1">
              <path d="M1 7h3l5-5v16l-5-5H1zM12 7c1 2 1 4 0 6M15 4c2 4 2 8 0 12" />
            </svg>
          </TrayIcon>
          <TrayIcon>
            <svg width="18" height="18" viewBox="0 0 18 18" fill="none" stroke="#555" strokeWidth="1">
              <path d="M1 13A13 13 0 0 1 13 1M4 14a10 10 0 0 1 9-9M7 15a6 6 0 0 1 6-6" />
              <circle cx="12" cy="15" r="1.300" fill="#222" />
            </svg>
          </TrayIcon>
          <Lang>ENG</Lang>
          <Clock>
            01:20
            <br />
            19-12-2022
          </Clock>
          <Notif>
            <svg width="20" height="24" viewBox="0 0 20 24">
              <path d="M0 0h20v17H9l-4 5v-5H0z" fill="#111" />
              <path d="M4 5h12M4 9h12M4 13h8" stroke="#fff" />
            </svg>
            <NotifCount>1</NotifCount>
          </Notif>
        </Tray>
      </Taskbar>
    </Page>
  );
}

export default App;
